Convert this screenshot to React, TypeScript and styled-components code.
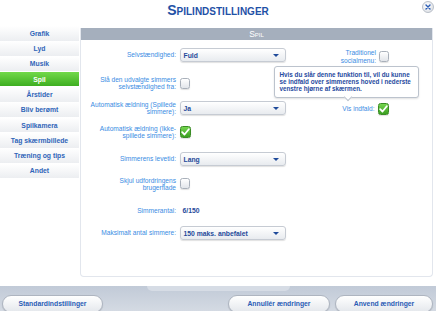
import React from "react";
import styled, { createGlobalStyle } from "styled-components";

const GlobalStyle = createGlobalStyle`
  html, body {
    margin: 0;
    padding: 0;
    background: #fff;
  }
  body {
    font-family: "Liberation Sans", Arial, sans-serif;
  }
`;

const Screen = styled.div`
  width: 436px;
  height: 311px;
  overflow: hidden;
  display: flex;
  flex-direction: column;
  background: #fff;
`;

const TitleBar = styled.header`
  position: relative;
  height: 26px;
  display: flex;
  justify-content: center;
`;

const Title = styled.h1`
  margin: 2px 0 0 0;
  font-size: 14px;
  line-height: 16px;
  font-weight: 700;
  font-variant: small-caps;
  color: #1f51a6;
`;

const CloseButton = styled.div`
  position: absolute;
  right: 2px;
  top: 1px;
  width: 10px;
  height: 10px;
  border-radius: 50%;
  border: 1px solid #b9bfc8;
  background: radial-gradient(circle at 40% 35%, #ffffff, #d6dae1);
  display: flex;
  align-items: center;
  justify-content: center;
`;

const Main = styled.div`
  display: flex;
  height: 251px;
`;

const Nav = styled.nav`
  width: 79px;
  display: flex;
  flex-direction: column;
  gap: 0.8px;
`;

const NavItem = styled.div<{ $active?: boolean }>`
  height: 14.5px;
  display: flex;
  align-items: center;
  justify-content: center;
  font-size: 6.8px;
  font-weight: 700;
  color: ${(p) => (p.$active ? "#ffffff" : "#2f64b8")};
  background: ${(p) =>
    p.$active
      ? "linear-gradient(#72d94a, #3eae21)"
      : "linear-gradient(#ffffff, #eceef1)"};
`;

const Panel = styled.section`
  flex: 1;
  margin: 1.5px 3px 0 1px;
  border: 1.5px solid #e2e6ed;
  border-top: none;
  border-radius: 0 0 4px 4px;
  display: flex;
  flex-direction: column;
`;

const PanelHeader = styled.div`
  height: 12.5px;
  background: #a5afbd;
  color: #fff;
  font-size: 8.5px;
  font-variant: small-caps;
  display: flex;
  align-items: center;
  justify-content: center;
`;

const PanelBody = styled.div`
  position: relative;
  flex: 1;
  display: flex;
`;

const LeftCol = styled.div`
  width: 215px;
  display: flex;
  flex-direction: column;
`;

const Row = styled.div<{ $mt: number; $h: number }>`
  margin-top: ${(p) => p.$mt}px;
  height: ${(p) => p.$h}px;
  display: grid;
  grid-template-columns: 95px 106px;
  column-gap: 3.5px;
  align-items: center;
`;

const Label = styled.div`
  text-align: right;
  font-size: 6.6px;
  line-height: 7.4px;
  color: #3a8ce3;
`;

const Value = styled.div`
  font-size: 6.8px;
  font-weight: 700;
  color: #1f4a9a;
  padding-left: 3px;
`;

const Select = styled.div`
  position: relative;
  height: 14px;
  box-sizing: border-box;
  border: 1px solid #c6cbd3;
  border-radius: 3px;
  background: linear-gradient(#ffffff, #e8ebef);
  box-shadow: 0 1px 1px rgba(0, 0, 0, 0.12);
  display: flex;
  align-items: center;
  padding-left: 3px;
  font-size: 6.8px;
  font-weight: 700;
  color: #1f4a9a;
  &::after {
    content: "";
    position: absolute;
    right: 6px;
    top: 5px;
    border-left: 3px solid transparent;
    border-right: 3px solid transparent;
    border-top: 3.5px solid #1f4a9a;
  }
`;

const Box = styled.div<{ $checked?: boolean }>`
  width: ${(p) => (p.$checked ? 11.5 : 10)}px;
  height: ${(p) => (p.$checked ? 12 : 11)}px;
  box-sizing: border-box;
  border-radius: 2.5px;
  border: 1px solid ${(p) => (p.$checked ? "#3a8c25" : "#a9b0ba")};
  background: ${(p) =>
    p.$checked
      ? "linear-gradient(#74d54e, #3a9e20)"
      : "linear-gradient(#ffffff, #e2e5ea)"};
  box-shadow: 0 1px 1px rgba(0, 0, 0, 0.12);
  display: flex;
  align-items: center;
  justify-content: center;
`;

const RightCol = styled.div`
  flex: 1;
  display: flex;
  flex-direction: column;
  align-items: flex-end;
  padding-right: 43px;
`;

const RightRow = styled.div<{ $mt: number }>`
  margin-top: ${(p) => p.$mt}px;
  height: 14px;
  display: flex;
  align-items: center;
  gap: 3px;
`;

const Tooltip = styled.div`
  position: absolute;
  left: 192.5px;
  top: 25.5px;
  width: 145px;
  height: 32px;
  box-sizing: border-box;
  padding: 4px 5px;
  background: #fff;
  border: 1px solid #bcc3cd;
  border-radius: 3px;
  box-shadow: 0 1px 2px rgba(0, 0, 0, 0.12);
  font-size: 6.3px;
  line-height: 7.4px;
  font-weight: 700;
  color: #1f4a9e;
  &::after {
    content: "";
    position: absolute;
    left: 70px;
    bottom: -3.5px;
    width: 5px;
    height: 5px;
    background: #fff;
    border-right: 1px solid #bcc3cd;
    border-bottom: 1px solid #bcc3cd;
    transform: rotate(45deg);
  }
`;

const Footer = styled.footer`
  position: relative;
  margin-top: auto;
  height: 25px;
  box-sizing: border-box;
  padding: 9px 3px 0 2px;
  background: linear-gradient(#c1cad7, #d4dae3);
  display: flex;
  justify-content: space-between;
  align-items: flex-start;
  &::before {
    content: "";
    position: absolute;
    left: 147px;
    top: 0;
    width: 143px;
    height: 5px;
    background: #d6dce5;
    border-radius: 0 0 6px 6px;
  }
`;

const ButtonGroup = styled.div`
  display: flex;
  gap: 5px;
`;

const Button = styled.button<{ $w: number }>`
  width: ${(p) => p.$w}px;
  height: 18px;
  padding: 0;
  border: 1px solid #aeb5c0;
  border-radius: 9px;
  background: linear-gradient(#ffffff, #e4e7ec);
  box-shadow: 0 1px 1px rgba(0, 0, 0, 0.15);
  font-family: "Liberation Sans", Arial, sans-serif;
  font-size: 6.8px;
  font-weight: 700;
  color: #2a5cb5;
  display: flex;
  justify-content: center;
  padding-top: 4px;
`;

const Check = () => (
  <svg width="9" height="8" viewBox="0 0 9 8">
    <path d="M1.2 4.2 L3.5 6.5 L7.8 1.3" fill="none" stroke="#fff" strokeWidth="1.8" strokeLinecap="round" strokeLinejoin="round" />
  </svg>
);

const navItems = [
  "Grafik",
  "Lyd",
  "Musik",
  "Spil",
  "Årstider",
  "Bliv berømt",
  "Spilkamera",
  "Tag skærmbillede",
  "Træning og tips",
  "Andet",
];

function App() {
  return (
    <Screen>
      <GlobalStyle />
      <TitleBar>
        <Title>Spilindstillinger</Title>
        <CloseButton>
          <svg width="6" height="6" viewBox="0 0 6 6">
            <path d="M1 1 L5 5 M5 1 L1 5" stroke="#2a5cb5" strokeWidth="1.4" strokeLinecap="round" />
          </svg>
        </CloseButton>
      </TitleBar>

      <Main>
        <Nav>
          {navItems.map((item) => (
            <NavItem key={item} $active={item === "Spil"}>
              {item}
            </NavItem>
          ))}
        </Nav>

        <Panel>
          <PanelHeader>Spil</PanelHeader>
          <PanelBody>
            <LeftCol>
              <Row $mt={8} $h={14}>
                <Label>Selvstændighed:</Label>
                <Select>Fuld</Select>
              </Row>
              <Row $mt={13} $h={16}>
                <Label>
                  Slå den udvalgte simmers
                  <br />
                  selvstændighed fra:
                </Label>
                <Box />
              </Row>
              <Row $mt={9} $h={16}>
                <Label>
                  Automatisk ældning (Spillede
                  <br />
                  simmere):
                </Label>
                <Select>Ja</Select>
              </Row>
              <Row $mt={8} $h={16}>
                <Label>
                  Automatisk ældning (Ikke-
                  <br />
                  spillede simmere):
                </Label>
                <Box $checked>
                  <Check />
                </Box>
              </Row>
              <Row $mt={11.5} $h={15}>
                <Label>Simmerens levetid:</Label>
                <Select>Lang</Select>
              </Row>
              <Row $mt={10} $h={14}>
                <Label>
                  Skjul udfordringens
                  <br />
                  brugerflade
                </Label>
                <Box />
              </Row>
              <Row $mt={14} $h={12}>
                <Label>Simmerantal:</Label>
                <Value>6/150</Value>
              </Row>
              <Row $mt={9.5} $h={14}>
                <Label>Maksimalt antal simmere:</Label>
                <Select>150 maks. anbefalet</Select>
              </Row>
            </LeftCol>

            <RightCol>
              <RightRow $mt={9.5}>
                <Label>
                  Traditionel
                  <br />
                  socialmenu:
                </Label>
                <Box />
              </RightRow>
              <RightRow $mt={38.3}>
                <Label>Vis indfald:</Label>
                <Box $checked>
                  <Check />
                </Box>
              </RightRow>
            </RightCol>

            <Tooltip>
              Hvis du slår denne funktion til, vil du kunne se indfald over
              simmerens hoved i nederste venstre hjørne af skærmen.
            </Tooltip>
          </PanelBody>
        </Panel>
      </Main>

      <Footer>
        <Button $w={101}>Standardindstillinger</Button>
        <ButtonGroup>
          <Button $w={102}>Annullér ændringer</Button>
          <Button $w={98}>Anvend ændringer</Button>
        </ButtonGroup>
      </Footer>
    </Screen>
  );
}

export default App;
